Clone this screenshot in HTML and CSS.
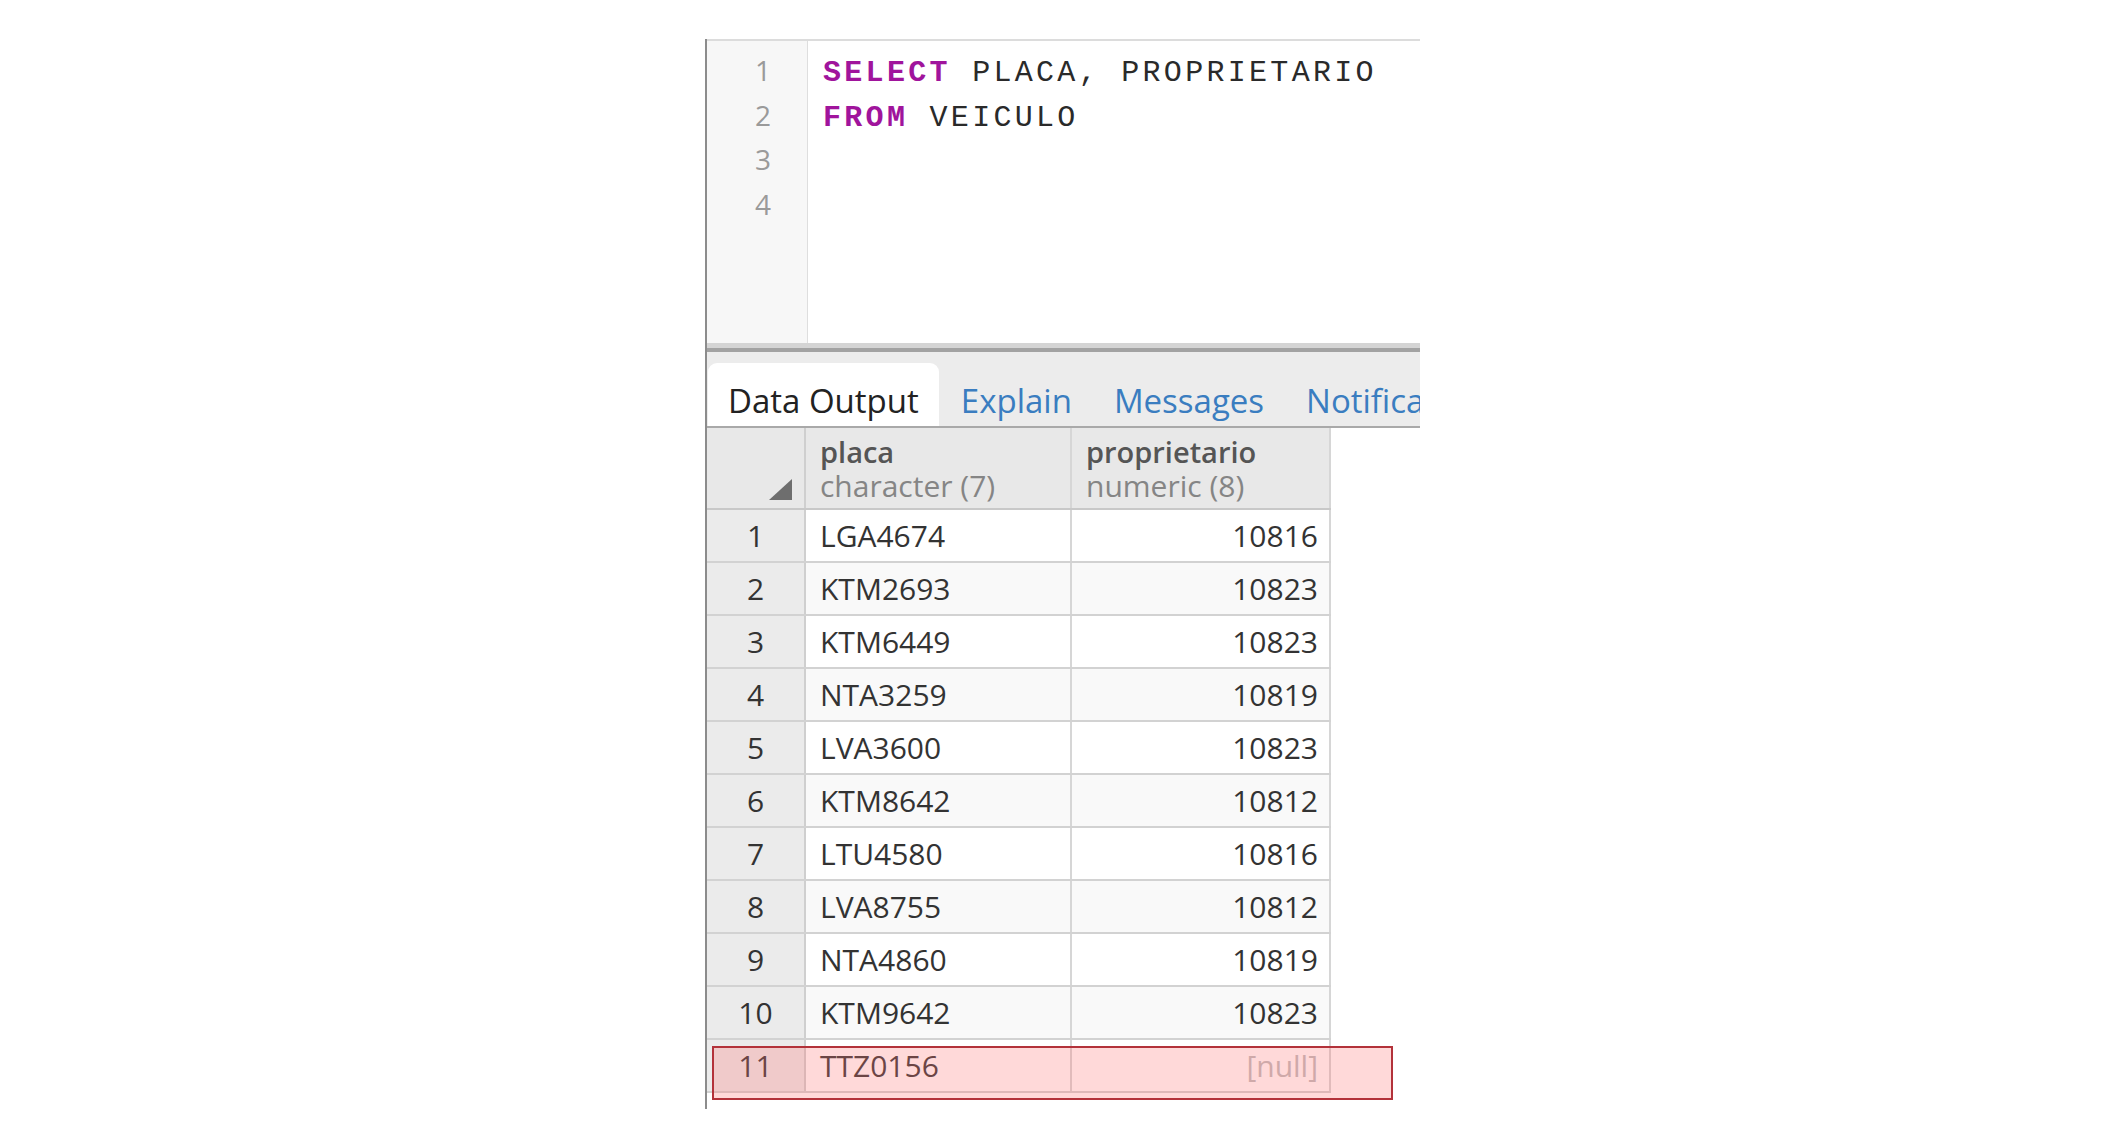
FILE: index.html
```html
<!DOCTYPE html>
<html lang="pt">
<head>
<meta charset="utf-8">
<title>Query Tool</title>
<link rel="stylesheet" href="styles.css">
</head>
<body>
<div class="panel">
  <div class="editor">
    <div class="gutter">
      <div class="ln">1</div>
      <div class="ln">2</div>
      <div class="ln">3</div>
      <div class="ln">4</div>
    </div>
    <div class="code">
      <div class="line"><span class="kw">SELECT</span> PLACA, PROPRIETARIO</div>
      <div class="line"><span class="kw">FROM</span> VEICULO</div>
      <div class="line"> </div>
      <div class="line"> </div>
    </div>
  </div>
  <div class="splitter"></div>
  <div class="tabs">
    <div class="tab active">Data Output</div>
    <div class="tab">Explain</div>
    <div class="tab">Messages</div>
    <div class="tab">Notifications</div>
  </div>
  <div class="grid">
    <div class="row head">
      <div class="cell num"><span class="sort"></span></div>
      <div class="cell"><div class="col-name">placa</div><div class="col-type">character (7)</div></div>
      <div class="cell"><div class="col-name">proprietario</div><div class="col-type">numeric (8)</div></div>
    </div>
    <div class="row"><div class="cell num">1</div><div class="cell">LGA4674</div><div class="cell right">10816</div></div>
    <div class="row alt"><div class="cell num">2</div><div class="cell">KTM2693</div><div class="cell right">10823</div></div>
    <div class="row"><div class="cell num">3</div><div class="cell">KTM6449</div><div class="cell right">10823</div></div>
    <div class="row alt"><div class="cell num">4</div><div class="cell">NTA3259</div><div class="cell right">10819</div></div>
    <div class="row"><div class="cell num">5</div><div class="cell">LVA3600</div><div class="cell right">10823</div></div>
    <div class="row alt"><div class="cell num">6</div><div class="cell">KTM8642</div><div class="cell right">10812</div></div>
    <div class="row"><div class="cell num">7</div><div class="cell">LTU4580</div><div class="cell right">10816</div></div>
    <div class="row alt"><div class="cell num">8</div><div class="cell">LVA8755</div><div class="cell right">10812</div></div>
    <div class="row"><div class="cell num">9</div><div class="cell">NTA4860</div><div class="cell right">10819</div></div>
    <div class="row alt"><div class="cell num">10</div><div class="cell">KTM9642</div><div class="cell right">10823</div></div>
    <div class="row"><div class="cell num">11</div><div class="cell">TTZ0156</div><div class="cell right null">[null]</div></div>
    <div class="highlight"></div>
  </div>
</div>
</body>
</html>
```

FILE: styles.css
```css
html, body {
  margin: 0;
  padding: 0;
  background: #ffffff;
}

body {
  font-family: "Open Sans", "Liberation Sans", sans-serif;
}

.panel {
  margin: 39px 0 0 705px;
  width: 713px;
  border-left: 2px solid #8c8c8c;
  padding-bottom: 16px;
  overflow: hidden;
  background: #ffffff;
}

/* ---------- editor ---------- */
.editor {
  display: flex;
  height: 302px;
  border-top: 2px solid #dcdcdc;
}

.gutter {
  width: 101px;
  background: #f7f7f7;
  border-right: 1px solid #dedede;
  padding-top: 7px;
  box-sizing: border-box;
  flex: none;
}

.ln {
  height: 44.7px;
  line-height: 44.7px;
  text-align: right;
  padding-right: 36px;
  font-family: "Open Sans", sans-serif;
  font-size: 28px;
  color: #9a9a9a;
}

.code {
  flex: 1;
  padding: 10px 0 0 15px;
}

.line {
  height: 44.7px;
  line-height: 44.7px;
  white-space: pre;
  font-family: "Liberation Mono", "DejaVu Sans Mono", monospace;
  font-size: 30px;
  letter-spacing: 3.3px;
  color: #2a2a2a;
}

.kw {
  color: #a0149c;
  font-weight: bold;
}

/* ---------- splitter ---------- */
.splitter {
  height: 9px;
  box-sizing: border-box;
  border-top: 5px solid #d4d4d4;
  border-bottom: 4px solid #a2a2a2;
  background: #c4c4c4;
}

/* ---------- tabs ---------- */
.tabs {
  display: flex;
  align-items: flex-end;
  gap: 2px;
  height: 74px;
  padding-left: 1px;
  background: #ececec;
  border-bottom: 2px solid #a9a9a9;
  white-space: nowrap;
}

.tab {
  padding: 16px 20px 3px;
  line-height: 44px;
  font-size: 33px;
  color: #3a7dc0;
  flex: none;
}

.tab.active {
  background: #ffffff;
  color: #222222;
  border-radius: 9px 9px 0 0;
}

/* ---------- grid ---------- */
.grid {
  position: relative;
  width: 624px;
}

.row {
  display: grid;
  grid-template-columns: 99px 266px 259px;
  height: 53px;
  box-sizing: border-box;
  border-bottom: 2px solid #d2d2d2;
  background: #ffffff;
}

.row.alt .cell {
  background: #f9f9f9;
}

.cell {
  box-sizing: border-box;
  border-right: 2px solid #d6d6d6;
  padding: 0 14px;
  line-height: 51px;
  font-size: 30px;
  color: #333333;
  white-space: nowrap;
  overflow: hidden;
}

.cell.right {
  text-align: right;
  padding-right: 11px;
}

.cell.null {
  color: #bdbdbd;
}

.row .cell.num,
.row.alt .cell.num {
  background: #ebebeb;
  text-align: center;
  padding: 0;
  border-right: 2px solid #cfcfcf;
}

.row.head {
  height: 82px;
  border-bottom: 2px solid #c8c8c8;
}

.row.head .cell {
  background: #e8e8e8;
  padding-top: 7px;
  line-height: 34px;
}

.row.head .cell.num {
  position: relative;
}

.col-name {
  font-weight: 600;
  font-size: 29px;
  color: #555555;
}

.col-type {
  font-size: 30px;
  color: #858585;
}

.sort {
  position: absolute;
  right: 12px;
  bottom: 8px;
  width: 0;
  height: 0;
  border-left: 23px solid transparent;
  border-bottom: 21px solid #6e6e6e;
}

.highlight {
  position: absolute;
  left: 5px;
  top: 618px;
  width: 681px;
  height: 54px;
  box-sizing: border-box;
  border: 2px solid #b3323a;
  background: rgba(255, 120, 120, 0.28);
  pointer-events: none;
}
```
